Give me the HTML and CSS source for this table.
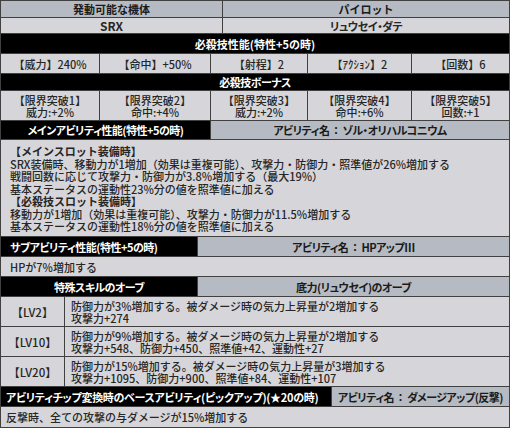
FILE: index.html
```html
<!DOCTYPE html>
<html lang="ja">
<head>
<meta charset="utf-8">
<link rel="stylesheet" href="styles.css">
</head>
<body>
<div class="sheet">
  <div class="row h17 cols-2">
    <div class="cell hd b">発動可能な機体</div>
    <div class="cell hd b">パイロット</div>
  </div>
  <div class="row h16 cols-2">
    <div class="cell lt b big">SRX</div>
    <div class="cell lt b kana">リュウセイ・ダテ</div>
  </div>
  <div class="row h20">
    <div class="cell band">必殺技性能(特性+5の時)</div>
  </div>
  <div class="row h20 cols-5">
    <div class="cell lt">【威力】240%</div>
    <div class="cell lt">【命中】+50%</div>
    <div class="cell lt">【射程】2</div>
    <div class="cell lt">【ｱｸｼｮﾝ】2</div>
    <div class="cell lt">【回数】6</div>
  </div>
  <div class="row h17">
    <div class="cell band kana">必殺技ボーナス</div>
  </div>
  <div class="row h30 cols-5">
    <div class="cell lt two">【限界突破1】<br>威力:+2%</div>
    <div class="cell lt two">【限界突破2】<br>命中:+4%</div>
    <div class="cell lt two">【限界突破3】<br>威力:+2%</div>
    <div class="cell lt two">【限界突破4】<br>命中:+6%</div>
    <div class="cell lt two">【限界突破5】<br>回数:+1</div>
  </div>
  <div class="row h19 cols-main">
    <div class="cell band kana">メインアビリティ性能(特性+5の時)</div>
    <div class="cell hd b kana">アビリティ名<span class="colon">：</span>ゾル・オリハルコニウム</div>
  </div>
  <div class="row h97">
    <div class="cell lt text">
      <p class="b">【メインスロット装備時】</p>
      <p>SRX装備時、移動力が1増加（効果は重複可能）、攻撃力・防御力・照準値が26%増加する</p>
      <p>戦闘回数に応じて攻撃力・防御力が3.8%増加する（最大19%）</p>
      <p>基本ステータスの運動性23%分の値を照準値に加える</p>
      <p class="b">【必殺技スロット装備時】</p>
      <p>移動力が1増加（効果は重複可能）、攻撃力・防御力が11.5%増加する</p>
      <p>基本ステータスの運動性18%分の値を照準値に加える</p>
    </div>
  </div>
  <div class="row h20 cols-sub">
    <div class="cell band left kana">サブアビリティ性能(特性+5の時)</div>
    <div class="cell hd b kana">アビリティ名<span class="colon">：</span>HPアップⅢ</div>
  </div>
  <div class="row h20">
    <div class="cell lt line">HPが7%増加する</div>
  </div>
  <div class="row h20 cols-sub">
    <div class="cell band kana">特殊スキルのオーブ</div>
    <div class="cell hd b kana">底力(リュウセイ)のオーブ</div>
  </div>
  <div class="row h30 cols-lv">
    <div class="cell lt lv">【LV2】</div>
    <div class="cell lt lvtext">
      <p>防御力が3%増加する。被ダメージ時の気力上昇量が2増加する</p>
      <p>攻撃力+274</p>
    </div>
  </div>
  <div class="row h30 cols-lv">
    <div class="cell lt lv">【LV10】</div>
    <div class="cell lt lvtext">
      <p>防御力が9%増加する。被ダメージ時の気力上昇量が2増加する</p>
      <p>攻撃力+548、防御力+450、照準値+42、運動性+27</p>
    </div>
  </div>
  <div class="row h30 cols-lv">
    <div class="cell lt lv">【LV20】</div>
    <div class="cell lt lvtext">
      <p>防御力が15%増加する。被ダメージ時の気力上昇量が3増加する</p>
      <p>攻撃力+1095、防御力+900、照準値+84、運動性+107</p>
    </div>
  </div>
  <div class="row h20 cols-chip">
    <div class="cell band left tight kana">アビリティチップ変換時のベースアビリティ(ピックアップ)(★20の時)</div>
    <div class="cell hd b kana">アビリティ名<span class="colon">：</span>ダメージアップ(反撃)</div>
  </div>
  <div class="row h21">
    <div class="cell lt line last">反撃時、全ての攻撃の与ダメージが15%増加する</div>
  </div>
</div>
</body>
</html>
```
FILE: styles.css
```css
* {
  box-sizing: border-box;
  margin: 0;
  padding: 0;
}

body {
  margin: 0;
  background: #ffffff;
  font-family: "Noto Sans CJK JP", "Noto Sans", sans-serif;
  font-size: 11px;
  font-weight: 500;
  color: #262626;
}

.sheet {
  width: 510px;
  border: 1px solid #404040;
  border-bottom: 0;
}

.row {
  display: grid;
  grid-template-columns: 1fr;
  border-bottom: 1px solid #404040;
}

.cols-2 { grid-template-columns: 222px 1fr; }
.cols-5 { grid-template-columns: 99px 111px 97px 104px 1fr; }
.cols-main { grid-template-columns: 210px 1fr; }
.cols-sub { grid-template-columns: 197px 1fr; }
.cols-lv { grid-template-columns: 64px 1fr; }
.cols-chip { grid-template-columns: 331px 1fr; }

.h16 { height: 16px; }
.h17 { height: 17px; }
.h19 { height: 19px; }
.h20 { height: 20px; }
.h21 { height: 21px; }
.h30 { height: 30px; }
.h97 { height: 97px; }

.cell {
  display: flex;
  align-items: center;
  justify-content: center;
  text-align: center;
  border-right: 1px solid #404040;
  white-space: nowrap;
  overflow: hidden;
  line-height: 12px;
}

.cell:last-child {
  border-right: 0;
}

.b {
  font-weight: bold;
}

.big {
  font-size: 12px;
}

.kana {
  font-feature-settings: "palt";
  letter-spacing: -0.5px;
}

.colon {
  font-feature-settings: normal;
  letter-spacing: 0;
  margin: 0 1px;
}

.hd {
  background: #b6bac2;
  color: #1a1a1a;
}

.lt {
  background: #d6d6da;
}

.band {
  background: #000000;
  color: #ffffff;
  font-weight: bold;
}

.band.left {
  justify-content: flex-start;
  padding-left: 9px;
}

.band.tight {
  padding-left: 5px;
  letter-spacing: -0.3px;
}

.two {
  line-height: 12px;
}

.text {
  display: block;
  text-align: left;
  padding: 5px 9px 0;
  line-height: 12.5px;
}

.line {
  justify-content: flex-start;
  padding-left: 9px;
}

.line.last {
  padding-left: 5px;
}

.lv {
  font-size: 11.5px;
}

.lvtext {
  display: block;
  text-align: left;
  padding: 3px 6px 0;
  line-height: 12px;
}
```
